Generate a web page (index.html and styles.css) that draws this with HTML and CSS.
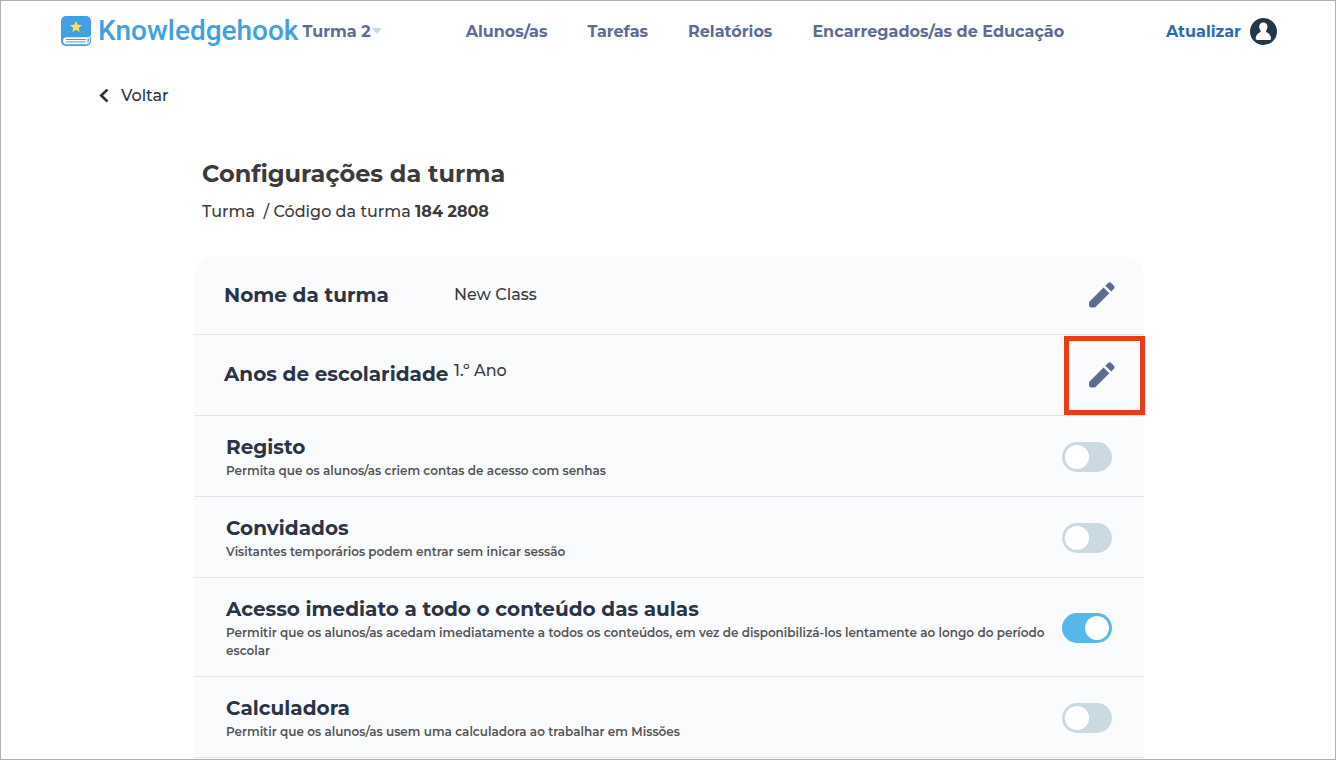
FILE: index.html
```html
<!DOCTYPE html>
<html lang="pt">
<head>
<meta charset="utf-8">
<meta name="viewport" content="width=device-width, initial-scale=1">
<title>Configurações da turma</title>
<link rel="stylesheet" href="styles.css">
</head>
<body>
<div class="page">
  <header class="topbar">
    <a class="brand" href="#">
      <svg class="brand-icon" viewBox="0 0 30 30" aria-hidden="true">
        <path fill="#419fe3" d="M5 0h20a5 5 0 0 1 5 5v20a5 5 0 0 1-5 5H5a5 5 0 0 1-5-5V5a5 5 0 0 1 5-5z"/>
        <path fill="#fff" d="M30 19c-.6 1.600-2 2.200-4 2.200H5.500C.8 21.200.8 28.300 5.500 28.300H25.500c2 0 3.300-1.300 3.300-3.300v-2.600c.8-.8 1.200-1.800 1.200-3.400z"/>
        <path fill="none" stroke="#419fe3" stroke-width="1" d="M5 23.500h20M5 25.900h20"/>
        <path fill="#419fe3" d="M26.500 22.500l1.300-.6V25q0 1.500-1.300 2z"/>
        <path fill="#ffdf57" d="M15 4.800l1.700 3.900 4.300.4-3.300 2.800 1 4.100-3.700-2.200-3.700 2.200 1-4.100L9 9.100l4.300-.4z"/>
      </svg>
      <span class="brand-name">Knowledgehook</span>
    </a>
    <button class="class-menu" type="button">Turma 2
      <svg class="caret" viewBox="0 0 10 6" aria-hidden="true"><path fill="#cbdae1" d="M0 0h10L5 6z"/></svg>
    </button>
    <nav class="nav">
      <a href="#">Alunos/as</a>
      <a href="#">Tarefas</a>
      <a href="#">Relatórios</a>
      <a href="#">Encarregados/as de Educação</a>
    </nav>
    <a class="upgrade" href="#">Atualizar</a>
    <button class="account" type="button" aria-label="Conta">
      <svg viewBox="0 0 28 28" aria-hidden="true">
        <circle cx="14.500" cy="14.500" r="13.500" fill="#233746"/>
        <path fill="#fff" d="M14.300 5.500c2.500 0 4.200 1.800 4.200 4.200 0 1.600-.6 2.800-1.300 3.700-.3 1 0 1.700.9 2.200 2.400 1.200 3.700 3.200 3.900 6.100 0 .8-.5 1.200-1.300 1.200H8c-.8 0-1.300-.4-1.300-1.200.2-2.900 1.500-4.900 3.900-6.100.9-.5 1.200-1.200.9-2.200-.8-.9-1.300-2.100-1.300-3.700 0-2.400 1.700-4.200 4.100-4.200z"/>
      </svg>
    </button>
  </header>

  <a class="back" href="#">
    <svg class="back-icon" viewBox="0 0 10 14" aria-hidden="true"><path fill="none" stroke="#2b3445" stroke-width="2.600" d="M8.500 .5L2.200 6.500l6.300 6"/></svg>
    Voltar
  </a>

  <main class="content">
    <div class="heading">
      <h1>Configurações da turma</h1>
      <p>Turma &nbsp;/ Código da turma <strong>184 2808</strong></p>
    </div>

    <section class="card">
      <div class="field field-name">
        <h2>Nome da turma</h2>
        <span class="value">New Class</span>
        <button class="edit" type="button" aria-label="Editar nome da turma">
          <svg viewBox="0 0 26 26" aria-hidden="true"><path fill="#5d6c91" d="M0 20L14.500 5.500l5.800 5.800L6 25.500H1.500L0 24zM16.300 3.800l2.600-2.600q1.800-1.700 3.600 0l2.200 2.200q1.800 1.800 0 3.600l-2.600 2.600z"/></svg>
        </button>
      </div>
      <div class="field field-grade">
        <h2>Anos de escolaridade</h2>
        <span class="value">1.º Ano</span>
        <button class="edit" type="button" aria-label="Editar anos de escolaridade">
          <svg viewBox="0 0 26 26" aria-hidden="true"><path fill="#5d6c91" d="M0 20L14.500 5.500l5.800 5.800L6 25.500H1.500L0 24zM16.300 3.800l2.600-2.600q1.800-1.700 3.600 0l2.200 2.200q1.800 1.800 0 3.600l-2.600 2.600z"/></svg>
        </button>
        <span class="highlight"></span>
      </div>
      <label class="option">
        <span class="option-text"><span class="option-title">Registo</span><span class="option-note">Permita que os alunos/as criem contas de acesso com senhas</span></span>
        <input class="switch" type="checkbox" role="switch">
      </label>
      <label class="option">
        <span class="option-text"><span class="option-title">Convidados</span><span class="option-note">Visitantes temporários podem entrar sem inicar sessão</span></span>
        <input class="switch" type="checkbox" role="switch">
      </label>
      <label class="option">
        <span class="option-text"><span class="option-title">Acesso imediato a todo o conteúdo das aulas</span><span class="option-note">Permitir que os alunos/as acedam imediatamente a todos os conteúdos, em vez de disponibilizá-los lentamente ao longo do período escolar</span></span>
        <input class="switch" type="checkbox" role="switch" checked>
      </label>
      <label class="option">
        <span class="option-text"><span class="option-title">Calculadora</span><span class="option-note">Permitir que os alunos/as usem uma calculadora ao trabalhar em Missões</span></span>
        <input class="switch" type="checkbox" role="switch">
      </label>
    </section>
  </main>
</div>
</body>
</html>
```
FILE: styles.css
```css
* { box-sizing: border-box; }

body {
  margin: 0;
  background: #fff;
  color: #3b3b3b;
  font-family: Montserrat, Inter, "Open Sans", sans-serif;
  font-size: 16px;
  font-weight: 500;
}

h1, h2, p { margin: 0; }
a { color: inherit; text-decoration: none; }
svg { display: block; }
button {
  padding: 0;
  border: 0;
  background: none;
  color: inherit;
  font: inherit;
  cursor: pointer;
}

.page {
  display: flex;
  flex-direction: column;
  min-height: 100vh;
  border: 1px solid #b0b0b0;
}

.topbar {
  display: flex;
  align-items: center;
  height: 60px;
  padding: 0 58px 0 60px;
  color: #5d6c91;
  font-weight: 700;
}
.brand { display: flex; align-items: center; gap: 7px; }
.brand-icon { width: 30px; height: 30px; }
.brand-name {
  color: #419fe3;
  font-family: Roboto, sans-serif;
  font-size: 28px;
  font-weight: 500;
  line-height: 32px;
}
.class-menu {
  display: flex;
  align-items: center;
  gap: 1px;
  margin-left: 4px;
}
.caret { width: 10px; height: 6px; }
.nav { display: flex; gap: 40px; margin-left: 84px; }
.upgrade { margin-left: auto; color: #2b6cb0; }
.account { width: 28px; height: 28px; margin-left: 8px; }
.account svg { overflow: visible; }

.back {
  display: flex;
  align-items: center;
  align-self: flex-start;
  gap: 12px;
  margin: 23px 0 0 98px;
  color: #2b3445;
  line-height: 24px;
}
.back-icon { width: 10px; height: 14px; }

.content {
  display: flex;
  flex: 1;
  flex-direction: column;
  width: 100%;
  max-width: 952px;
  margin: 52px auto 0;
  padding-left: 2px;
}
.heading { padding: 0 8px 32px; }
.heading h1 { font-size: 24px; font-weight: 700; line-height: 28px; }
.heading p { margin-top: 12px; line-height: 24px; }

.card {
  flex: 1;
  border-radius: 20px 20px 0 0;
  background: #fafbfd;
  color: #2b3445;
}
.field {
  position: relative;
  display: grid;
  grid-template-columns: 230px 1fr auto;
  align-items: center;
  min-height: 79px;
  padding: 0 29px 0 30px;
  border-bottom: 1px solid #e2e5e9;
}
.field-grade { min-height: 81px; }
.field h2, .option-title { font-size: 20px; font-weight: 700; line-height: 28px; }
.field h2 { white-space: nowrap; }
.field-grade h2 { padding-bottom: 2px; }
.value { padding-bottom: 2px; color: #3b3b3b; }
.field-grade .value { padding-bottom: 10px; }
.edit { width: 26px; height: 26px; }
.highlight {
  position: absolute;
  top: 1px;
  right: -1px;
  bottom: 0;
  width: 81px;
  border: 5px solid #eb3c17;
  pointer-events: none;
}

.option {
  display: flex;
  align-items: center;
  justify-content: space-between;
  gap: 12px;
  padding: 17px 32px 16px;
  border-bottom: 1px solid #e2e5e9;
}
.option-title, .option-note { display: block; }
.option-title { margin-bottom: 1px; }
.option-note { color: #555; font-size: 12px; font-weight: 600; line-height: 18px; }
.switch {
  flex: none;
  display: flex;
  align-items: center;
  width: 50px;
  height: 30px;
  margin: 0;
  padding: 3px;
  border-radius: 15px;
  background: #cbdae1;
  appearance: none;
}
.switch::before {
  width: 24px;
  height: 24px;
  border-radius: 50%;
  background: #fff;
  content: "";
}
.switch:checked { justify-content: flex-end; background: #57b7ea; }
```
